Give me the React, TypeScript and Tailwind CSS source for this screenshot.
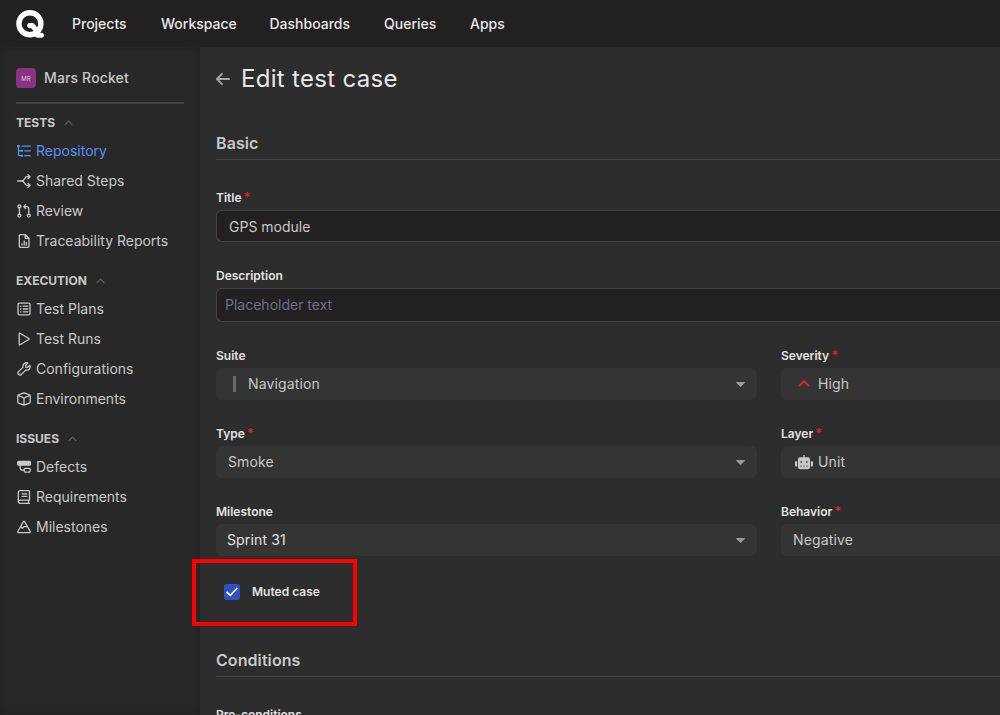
import type { ReactNode } from "react";

const NAV = [
  { label: "Projects", cls: "w-[89px]" },
  { label: "Workspace", cls: "w-[108.5px]" },
  { label: "Dashboards", cls: "w-[114.5px]" },
  { label: "Queries", cls: "w-[86px]" },
  { label: "Apps", cls: "w-[60px]" },
];

function Icon({ children }: { children: ReactNode }) {
  return (
    <svg
      className="mt-0.5 h-3.5 w-3.5 shrink-0"
      viewBox="0 0 14 14"
      fill="none"
      stroke="currentColor"
      strokeWidth="1.3"
      strokeLinecap="round"
      strokeLinejoin="round"
    >
      {children}
    </svg>
  );
}

const GROUPS: { title: string; items: { label: string; active?: boolean; icon: ReactNode }[] }[] = [
  {
    title: "TESTS",
    items: [
      {
        label: "Repository",
        active: true,
        icon: (
          <Icon>
            <path d="M1.5 1.8V10.4Q1.5 11.7 2.8 11.7H4.5M1.5 6.8H4.5M5.3 2.2H13.4M7.8 6.8H13.4M7.8 11.7H13.4" />
            <circle cx="1.5" cy="2.2" r="0.8" fill="currentColor" />
            <circle cx="4.9" cy="6.8" r="0.6" fill="currentColor" />
            <circle cx="4.9" cy="11.7" r="0.6" fill="currentColor" />
          </Icon>
        ),
      },
      {
        label: "Shared Steps",
        icon: (
          <Icon>
            <path d="M0.7 7H5.2M13 2.7H9.8C7.7 2.7 7.3 7 5.2 7C7.3 7 7.7 11.3 9.8 11.3H13M11 0.8L13.1 2.7L11 4.7M11 9.3L13.1 11.3L11 13.2" />
            <circle cx="5.4" cy="7" r="0.9" fill="currentColor" stroke="none" />
          </Icon>
        ),
      },
      {
        label: "Review",
        icon: (
          <Icon>
            <circle cx="2.4" cy="2.4" r="1.5" />
            <circle cx="2.4" cy="11.6" r="1.5" />
            <circle cx="11.8" cy="11.6" r="1.5" />
            <path d="M2.4 3.9V10.1M11.8 10.1V5Q11.8 2.6 9.4 2.6H7M8.6 0.8L6.7 2.6L8.6 4.5" />
          </Icon>
        ),
      },
      {
        label: "Traceability Reports",
        icon: (
          <Icon>
            <path d="M3.6 0.7H8.4L12 4.2V12Q12 13.3 10.7 13.3H3.6Q2.3 13.3 2.3 12V2Q2.3 0.7 3.6 0.7ZM8.2 0.9V4.3H11.8" />
            <path d="M5 9.6V11M7.2 7V11M9.4 8.4V11" />
          </Icon>
        ),
      },
    ],
  },
  {
    title: "EXECUTION",
    items: [
      {
        label: "Test Plans",
        icon: (
          <Icon>
            <rect x="1" y="1.2" width="12" height="11.6" rx="1.4" />
            <path d="M6.2 4.2H10.8M6.2 7H10.8M6.2 9.8H10.8M3.5 4.2H3.9M3.5 7H3.9M3.5 9.8H3.9" />
          </Icon>
        ),
      },
      {
        label: "Test Runs",
        icon: (
          <Icon>
            <path d="M2.2 1.7V12.3Q2.2 13.2 3 12.7L11.8 7.5Q12.5 7 11.8 6.5L3 1.3Q2.2 0.8 2.2 1.7Z" />
          </Icon>
        ),
      },
      {
        label: "Configurations",
        icon: (
          <Icon>
            <path d="M12.8 3.3L10.7 5.3L8.8 5.2L8.7 3.3L10.8 1.1C8.5 0.1 5.3 1.8 6.1 5.1L1.3 9.9C-0.1 11.5 2.4 14 4.1 12.7L8.9 7.9C12.2 8.7 13.9 5.7 12.8 3.3Z" />
            <circle cx="2.9" cy="11.2" r="0.5" fill="currentColor" stroke="none" />
          </Icon>
        ),
      },
      {
        label: "Environments",
        icon: (
          <Icon>
            <path d="M7 0.8L12.6 2.9Q13.2 3.2 13.2 3.8V10.2Q13.2 10.8 12.6 11.1L7 13.2L1.4 11.1Q0.8 10.8 0.8 10.2V3.8Q0.8 3.2 1.4 2.9ZM1.1 3.5L7 5.8L12.9 3.5M7 5.8V13" />
          </Icon>
        ),
      },
    ],
  },
  {
    title: "ISSUES",
    items: [
      {
        label: "Defects",
        icon: (
          <Icon>
            <rect x="0.7" y="1.4" width="12.8" height="3.8" rx="1" fill="currentColor" />
            <path d="M3.2 5V7.6Q3.2 10.2 5.6 10.2H7" />
            <rect x="7.2" y="8.3" width="6" height="3.8" rx="1" />
          </Icon>
        ),
      },
      {
        label: "Requirements",
        icon: (
          <Icon>
            <path d="M12.5 10V1.5Q12.5 0.7 11.7 0.7H3.2Q1.3 0.7 1.3 2.6V11.5Q1.3 13.3 3.2 13.3H12.5M12 10.2H3.2Q1.3 10.2 1.3 11.7M11.5 10.2V13.2M5 3.8H9.8M5 6.3H9.8" />
          </Icon>
        ),
      },
      {
        label: "Milestones",
        icon: (
          <Icon>
            <path d="M6.4 1.6Q7 0.8 7.6 1.6L13.1 11.2Q13.6 12.7 12.2 12.7H1.8Q0.4 12.7 0.9 11.2ZM3.9 6.7L5.4 8.3L7 6.6H10.1" />
          </Icon>
        ),
      },
    ],
  },
];

function Label({ text, required }: { text: string; required?: boolean }) {
  return (
    <div className="flex h-[26px] items-center pt-0.5 text-[12px] font-semibold text-[#e3e3e3]">
      {text}
      {required && <span className="ml-0.5 text-[13px] font-semibold text-[#dc2328]">*</span>}
    </div>
  );
}

function Select({ children, pad = "pl-3" }: { children: ReactNode; pad?: string }) {
  return (
    <div className={`flex h-8 items-center rounded-md bg-[#343434] pr-3 text-[14px] text-[#c8c8c8] ${pad}`}>
      {children}
      <svg className="ml-auto h-[5px] w-[9px]" viewBox="0 0 9 5" fill="#9a9a9a">
        <path d="M0.7 0H8.3Q9.3 0.1 8.6 0.9L5.1 4.6Q4.5 5.1 3.9 4.6L0.4 0.9Q-0.3 0.1 0.7 0Z" />
      </svg>
    </div>
  );
}

function Value({ children }: { children: ReactNode }) {
  return <span className="pb-0.5 tracking-[0.01em]">{children}</span>;
}

function Section({ title }: { title: string }) {
  return (
    <h2 className="flex h-[34px] items-center border-b border-[#434343] text-[16px] font-semibold tracking-[0.005em] text-[#c8c8c8]">
      {title}
    </h2>
  );
}

export default function App() {
  return (
    <div className="flex h-[715px] w-[1000px] flex-col overflow-hidden bg-[#2d2d2d] font-['Inter',sans-serif] text-[#c8c8c8]">
      <header className="flex h-[47px] shrink-0 items-center bg-[#232021] pl-4">
        <svg className="mr-7 h-7 w-7 shrink-0" viewBox="0 0 28 28" fill="none" stroke="white">
          <circle cx="13.9" cy="13.7" r="11" strokeWidth="5.4" />
          <path d="M13.8 15.6H16.4L21.5 21.5" strokeWidth="5.2" strokeLinecap="round" strokeLinejoin="round" />
          <path d="M21.5 25.2H25.4" strokeWidth="5" strokeLinecap="round" />
        </svg>
        <nav className="flex text-[14px] font-medium text-[#e8e8e8]">
          {NAV.map((n) => (
            <a key={n.label} className={n.cls}>
              {n.label}
            </a>
          ))}
        </nav>
      </header>
      <div className="flex min-h-0 flex-1">
        <aside className="w-[200px] shrink-0 bg-[#282828] px-4 pt-4 shadow-[inset_0_0_10px_rgba(0,0,0,0.22)]">
          <div className="flex h-[41px] items-start border-b-2 border-[#444444] pt-[5px] text-[14px] font-medium tracking-[0.01em]">
            <span className="mr-2 flex h-5 w-5 items-center justify-center rounded bg-[#8b3383] text-[6px] font-normal text-[#e2c6df]">
              MR
            </span>
            <span className="-mt-px">Mars Rocket</span>
          </div>
          <div className="flex flex-col gap-2.5 pt-1">
            {GROUPS.map((g) => (
              <section key={g.title}>
                <h3 className="flex h-7 items-center gap-[9px] pt-0.5 text-[12px] font-bold">
                  {g.title}
                  <svg className="h-1.5 w-[9px]" viewBox="0 0 9 6" fill="none" stroke="#5c5c5c" strokeWidth="1.1">
                    <path d="M0.7 5L4.5 1L8.3 5" />
                  </svg>
                </h3>
                {g.items.map((it) => (
                  <a
                    key={it.label}
                    className={`flex h-[30px] items-center gap-[5.5px] pb-0.5 pl-[0.5px] text-[14px] whitespace-nowrap ${it.active ? "text-[#5592f2]" : ""}`}
                  >
                    {it.icon}
                    {it.label}
                  </a>
                ))}
              </section>
            ))}
          </div>
        </aside>
        <main className="min-w-0 flex-1 pl-4">
          <h1 className="flex h-16 items-center gap-[11px] text-[24px] tracking-[0.3px] text-[#e8e8e8]">
            <svg className="h-3.5 w-3.5" viewBox="0 0 14 14" fill="none" stroke="#a6a6a6" strokeWidth="1.8" strokeLinecap="round" strokeLinejoin="round">
              <path d="M13.1 7H1M6 1.8L0.9 7L6 12.2" />
            </svg>
            Edit test case
          </h1>
          <div className="pt-[15px]">
            <Section title="Basic" />
          </div>
          <div className="pt-6">
            <Label text="Title" required />
            <div className="flex h-8 items-center rounded-l-md border border-r-0 border-[#434343] bg-[#232021] pl-3 text-[14px]">
              GPS module
            </div>
          </div>
          <div className="pt-5">
            <Label text="Description" />
            <div className="flex h-[34px] items-center rounded-l-md border border-r-0 border-[#434343] bg-[#232021] pb-0.5 pl-2 text-[14px] text-[#6b7280]">
              Placeholder text
            </div>
          </div>
          <div className="grid w-[1106px] grid-cols-[541px_541px] gap-x-6 gap-y-5 pt-5">
            <div>
              <Label text="Suite" />
              <Select pad="pl-[17px]">
                <span className="mr-3 h-4 w-[3px] bg-[#6c6c6c]" />
                <Value>Navigation</Value>
              </Select>
            </div>
            <div>
              <Label text="Severity" required />
              <Select pad="pl-[17px]">
                <svg className="mr-2 mb-0.5 h-[7px] w-3" viewBox="0 0 12 7" fill="none" stroke="#dc2328" strokeWidth="2">
                  <path d="M1 6L6 1.3L11 6" />
                </svg>
                <Value>High</Value>
              </Select>
            </div>
            <div>
              <Label text="Type" required />
              <Select>
                <Value>Smoke</Value>
              </Select>
            </div>
            <div>
              <Label text="Layer" required />
              <Select pad="pl-[13.5px]">
                <svg className="mr-[5.5px] h-[15px] w-[18px]" viewBox="0 0 18 15" fill="#c8c8c8">
                  <path d="M8.3 0H9.8V2.2H13Q15 2.2 15 4.2V12.4Q15 14.2 13 14.2H5Q3 14.2 3 12.4V4.2Q3 2.2 5 2.2H8.3ZM0.9 6.2H2.2V11.6H0.9Q0 11.5 0 10.7V7.1Q0 6.3 0.9 6.2ZM15.8 6.2H17.1Q18 6.3 18 7.1V10.7Q18 11.5 17.1 11.6H15.8Z" />
                  <path d="M5.5 6.2H7V7.8H5.5ZM11 6.2H12.5V7.8H11ZM5.4 10.7H7V11.6H5.4ZM8.2 10.7H9.8V11.6H8.2ZM11 10.7H12.6V11.6H11Z" fill="#343434" />
                </svg>
                <Value>Unit</Value>
              </Select>
            </div>
            <div>
              <Label text="Milestone" />
              <Select pad="pl-[11px]">
                <span className="pb-0.5 tracking-[0.01em] text-[#e3e3e3]">Sprint 31</span>
              </Select>
            </div>
            <div>
              <Label text="Behavior" required />
              <Select>
                <Value>Negative</Value>
              </Select>
            </div>
          </div>
          <div className="relative z-10 mt-[3px] -ml-6 flex h-[67px] w-[165px] items-center gap-3 border-4 border-[#ff0000] pb-px pl-7 text-[12px] font-semibold text-[#e3e3e3]">
            <span className="flex h-4 w-4 items-center justify-center rounded-[3px] bg-[#2e52c5]">
              <svg className="h-2.5 w-3" viewBox="0 0 12 10" fill="none" stroke="white" strokeWidth="1.7">
                <path d="M0.6 5L4.3 8.3L11.3 1" />
              </svg>
            </span>
            Muted case
          </div>
          <div className="pt-[17px]">
            <Section title="Conditions" />
          </div>
          <div className="pt-6">
            <Label text="Pre-conditions" />
          </div>
        </main>
      </div>
    </div>
  );
}
